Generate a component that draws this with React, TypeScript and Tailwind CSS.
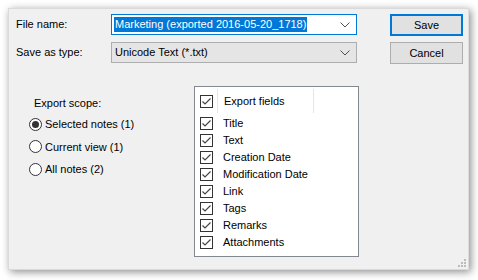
import React from "react";

const fields = [
  "Title",
  "Text",
  "Creation Date",
  "Modification Date",
  "Link",
  "Tags",
  "Remarks",
  "Attachments",
];

function Chevron() {
  return (
    <svg width="10" height="6" viewBox="0 0 10 6" className="shrink-0">
      <path d="M0.5 0.5 L5 5 L9.5 0.5" fill="none" stroke="#505050" strokeWidth="1" />
    </svg>
  );
}

function CheckBox() {
  return (
    <span className="flex h-[13px] w-[13px] shrink-0 items-center justify-center border border-[#333] bg-white">
      <svg width="11" height="11" viewBox="0 0 11 11">
        <path d="M1.5 5.5 L4 8 L9.5 2.5" fill="none" stroke="#444" strokeWidth="1.2" />
      </svg>
    </span>
  );
}

function Radio({ label, checked }: { label: string; checked?: boolean }) {
  return (
    <div className="flex h-[22.5px] items-center">
      <span className="flex h-[13px] w-[13px] items-center justify-center rounded-full border border-[#333] bg-white">
        {checked && <span className="h-[7px] w-[7px] rounded-full bg-[#333]" />}
      </span>
      <span className="ml-[3px]">{label}</span>
    </div>
  );
}

export default function App() {
  return (
    <div className="h-[280px] w-[478px] bg-white pl-2 pt-2 font-['Liberation_Sans',Arial,sans-serif] text-[11px] text-black">
      <div className="relative h-[262px] w-[461px] border border-[#dadada] bg-[#f0f0f0] shadow-[2px_2px_8px_rgba(0,0,0,0.45)]">
        {/* top rows */}
        <div className="flex pl-[7px] pt-[5px]">
          <div className="flex flex-col gap-[7px]">
            <div className="flex h-[21px] items-center">
              <span className="w-[95px]">File name:</span>
              <div className="flex h-[21px] w-[246px] items-center justify-between border border-[#0078d7] bg-white pl-[2px] pr-[6px]">
                <span className="bg-[#0078d7] px-[1px] leading-[15px] text-white">
                  Marketing (exported 2016-05-20_1718)
                </span>
                <Chevron />
              </div>
            </div>
            <div className="flex h-[21px] items-center">
              <span className="w-[95px]">Save as type:</span>
              <div className="flex h-[21px] w-[246px] items-center justify-between border border-[#adadad] bg-[#e5e5e5] pl-[3px] pr-[6px]">
                <span>Unicode Text (*.txt)</span>
                <Chevron />
              </div>
            </div>
          </div>
          <div className="ml-[33px] flex flex-col gap-[6px]">
            <button className="h-[22px] w-[73px] border-2 border-[#0078d7] bg-[#e1e1e1]">Save</button>
            <button className="h-[22px] w-[73px] border border-[#adadad] bg-[#e1e1e1]">Cancel</button>
          </div>
        </div>

        {/* bottom area */}
        <div className="mt-[22px] flex">
          <div className="ml-[20px] w-[165px] pt-[10px]">
            <div className="ml-[5px] h-[15px] leading-[15px]">Export scope:</div>
            <div className="mt-[2px]">
              <Radio label="Selected notes (1)" checked />
              <Radio label="Current view (1)" />
              <Radio label="All notes (2)" />
            </div>
          </div>
          <div className="h-[171px] w-[165px] border border-[#828790] bg-white">
            <div className="flex h-[28px] items-center">
              <div className="flex h-full w-[22px] items-center justify-center pl-[1px] pt-[1px]">
                <CheckBox />
              </div>
              <div className="my-auto h-[24px] w-px bg-[#e5e5e5]" />
              <div className="flex h-full w-[95px] items-center pl-[6px]">Export fields</div>
              <div className="my-auto h-[24px] w-px bg-[#e5e5e5]" />
            </div>
            {fields.map((f) => (
              <div key={f} className="flex h-[17px] items-center pl-[5px]">
                <CheckBox />
                <span className="ml-[10px]">{f}</span>
              </div>
            ))}
          </div>
        </div>

        {/* resize grip */}
        <svg width="8" height="8" viewBox="0 0 8 8" className="absolute bottom-[2px] right-[2px]">
          <g fill="#bcbcbc">
            <rect x="6" y="0" width="2" height="2" />
            <rect x="3" y="3" width="2" height="2" />
            <rect x="6" y="3" width="2" height="2" />
            <rect x="0" y="6" width="2" height="2" />
            <rect x="3" y="6" width="2" height="2" />
            <rect x="6" y="6" width="2" height="2" />
          </g>
        </svg>
      </div>
    </div>
  );
}
